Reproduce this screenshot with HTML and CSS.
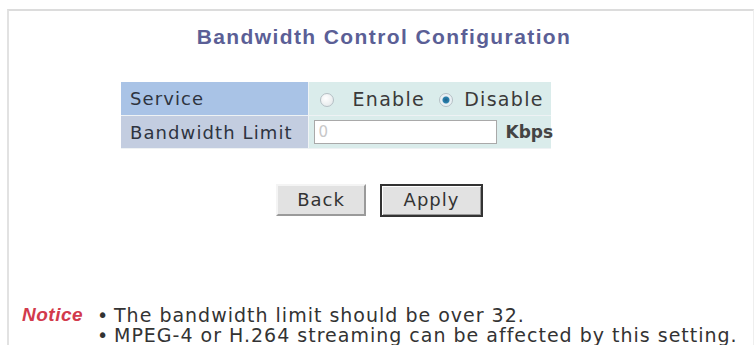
FILE: index.html
```html
<!DOCTYPE html>
<html>
<head>
<meta charset="utf-8">
<link rel="stylesheet" href="styles.css">
</head>
<body>
<div class="frame">
  <h1 class="title">Bandwidth Control Configuration</h1>
  <table class="cfg">
    <colgroup><col class="c1"><col class="c2"></colgroup>
    <tr>
      <td class="lbl lbl1">Service</td>
      <td class="val"><span class="radio r1"></span><span class="rtext">Enable</span> <span class="radio on"></span><span class="rtext">Disable</span></td>
    </tr>
    <tr>
      <td class="lbl lbl2">Bandwidth Limit</td>
      <td class="val val2"><span class="input">0</span><span class="unit">Kbps</span></td>
    </tr>
  </table>
  <div class="buttons">
    <span class="btn back">Back</span>
    <span class="btn def">Apply</span>
  </div>
  <div class="notice">
    <span class="ntitle">Notice</span>
    <ul class="nlist">
      <li>The bandwidth limit should be over 32.</li>
      <li>MPEG-4 or H.264 streaming can be affected by this setting.</li>
    </ul>
  </div>
</div>
</body>
</html>
```
FILE: styles.css
```css
html, body {
  margin: 0;
  padding: 0;
  background: #fff;
}
body {
  padding: 9px 2px 0 7px;
  font-family: "DejaVu Sans", Verdana, sans-serif;
  color: #333;
  overflow: hidden;
}
.frame {
  border-top: 2px solid #dcdcdc;
  border-left: 2px solid #e2e2e2;
  border-right: 1px solid #eeeeee;
  height: 340px;
  box-sizing: border-box;
}
.title {
  margin: 13px 0 0 0;
  text-align: center;
  font-family: "Liberation Sans", Arial, sans-serif;
  font-weight: bold;
  font-size: 21px;
  letter-spacing: 1.4px;
  color: #5b5f96;
  line-height: 26px;
  padding-left: 6px;
}
.cfg {
  margin: 32px 0 0 112px;
  border-collapse: collapse;
  table-layout: fixed;
  width: 430px;
}
.c1 { width: 187px; }
.c2 { width: 243px; }
.cfg td {
  height: 33px;
  padding: 0;
  border-bottom: 1px solid #eef2f4;
  white-space: nowrap;
}
.cfg tr:last-child td { height: 32px; }
.lbl {
  padding-left: 9px !important;
  color: #2e3440;
  border-right: 1px solid #f0f4f6;
  font-size: 18px;
  letter-spacing: 1.1px;
}
.lbl1 { background: #a9c3e6; }
.lbl2 { background: #c3cde0; }
.val {
  background: #daeceb;
  padding-left: 0 !important;
  color: #3a3a3a;
}
.val2 { padding-left: 5px !important; }
.radio {
  display: inline-block;
  width: 14px;
  height: 14px;
  border-radius: 50%;
  border: 1px solid #b4bfc4;
  background: radial-gradient(circle at 40% 35%, #ffffff, #dfe4e6);
  vertical-align: -1px;
  box-sizing: border-box;
  margin: 0 11px 0 9px;
}
.radio.r1 {
  margin: 0 19px 0 11px;
}
.radio.on {
  background: radial-gradient(circle, #1d5f8a 0, #2b82ad 3px, #e6eef3 4px, #f6f8fa 100%);
}
.rtext {
  font-size: 19px;
  letter-spacing: 1.3px;
}
.input {
  display: inline-block;
  width: 183px;
  height: 24px;
  box-sizing: border-box;
  border: 1px solid #a9a9a9;
  background: #fff;
  color: #c8c8c8;
  font-size: 15px;
  line-height: 22px;
  padding-left: 4px;
  vertical-align: middle;
}
.unit {
  margin-left: 9px;
  font-weight: bold;
  color: #444;
  font-size: 17px;
  vertical-align: middle;
}
.buttons {
  margin-top: 35px;
  display: flex;
  justify-content: center;
  gap: 14px;
  padding-right: 3px;
}
.btn {
  display: inline-block;
  box-sizing: border-box;
  height: 32px;
  line-height: 28px;
  font-size: 18px;
  letter-spacing: 1px;
  color: #333;
  background: #e2e2e2;
  border: 2px solid;
  border-color: #f4f4f4 #9a9a9a #9a9a9a #f4f4f4;
  text-align: center;
}
.btn.back { width: 90px; }
.btn.def {
  width: 103px;
  height: 33px;
  border: 2px solid #333;
  box-shadow: inset 1px 1px 0 #fff, inset -1px -1px 0 #999;
}
.notice {
  margin-top: 88px;
  display: flex;
  align-items: flex-start;
  color: #333;
}
.ntitle {
  margin-left: 13px;
  width: 75px;
  font-family: "Liberation Sans", Arial, sans-serif;
  font-style: italic;
  font-weight: bold;
  font-size: 19px;
  letter-spacing: 0.5px;
  color: #d23a4c;
  line-height: 20px;
}
.nlist {
  margin: 0;
  padding: 0;
  list-style: none;
  line-height: 20px;
  font-size: 19px;
  letter-spacing: 1px;
  white-space: nowrap;
}
.nlist li::before {
  content: "\2022";
  display: inline-block;
  width: 17px;
  letter-spacing: 0;
}
```
